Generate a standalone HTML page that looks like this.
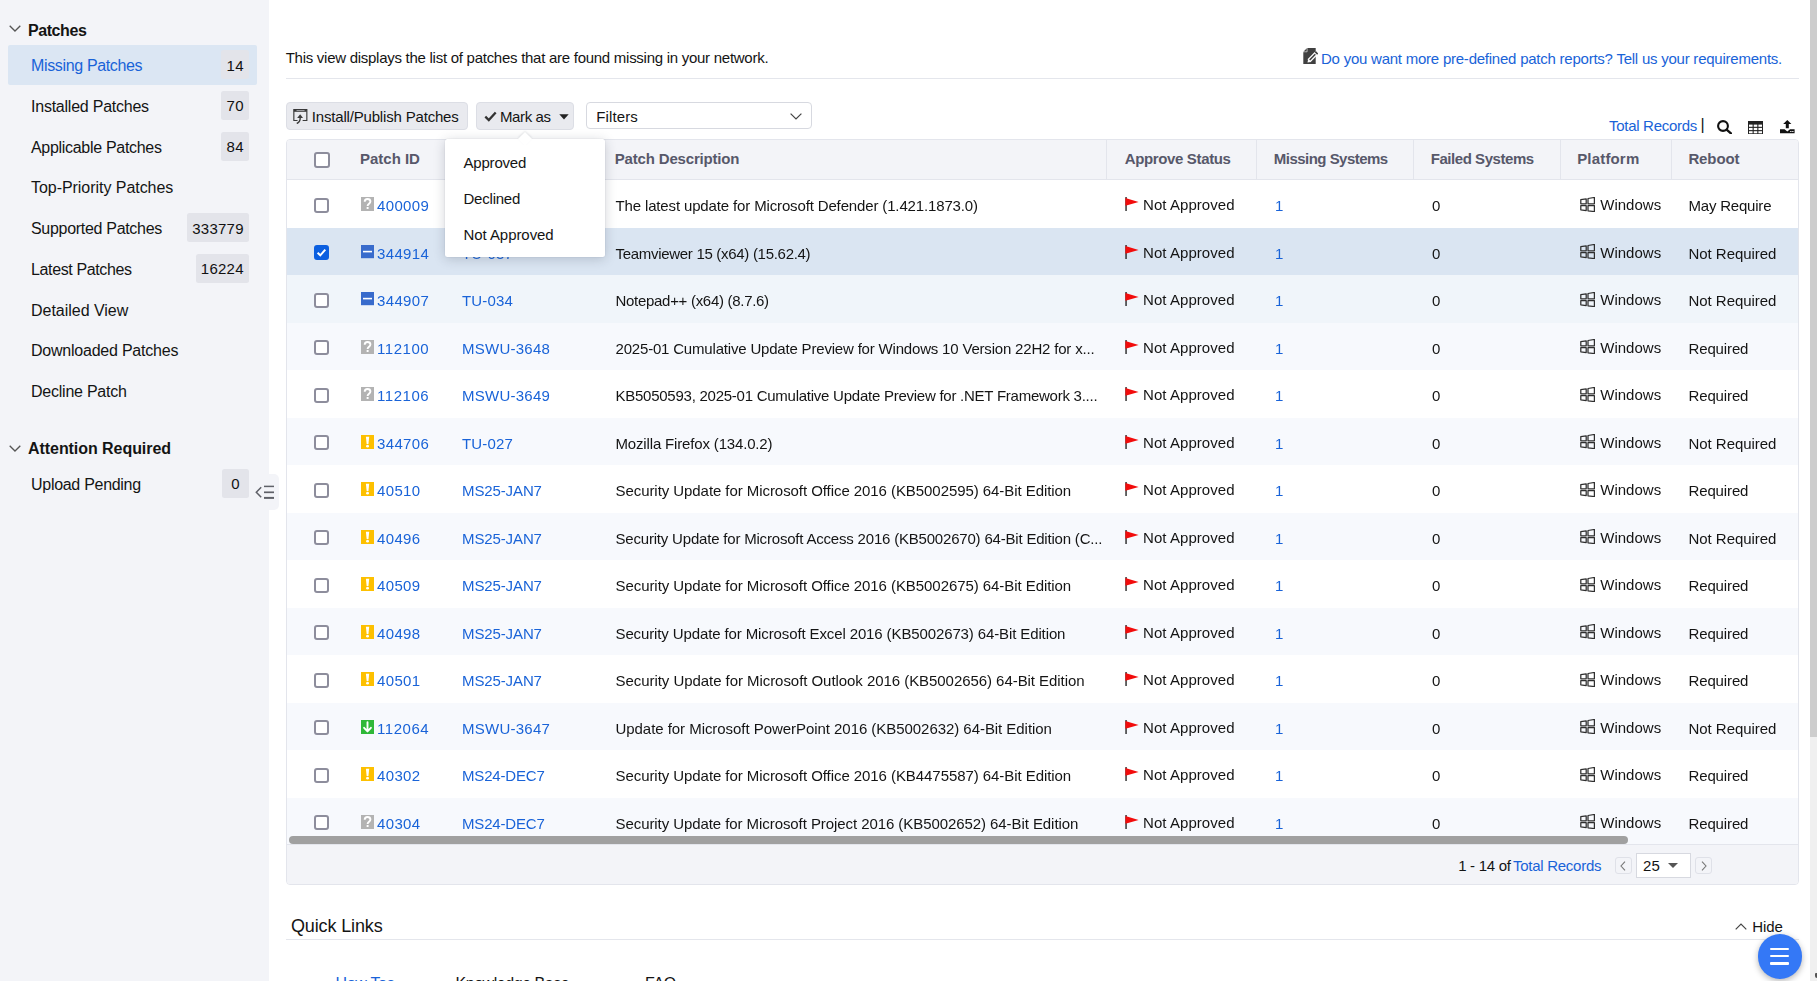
<!DOCTYPE html>
<html lang="en">
<head>
<meta charset="utf-8">
<title>Missing Patches</title>
<style>
*{box-sizing:border-box}
html,body{margin:0;padding:0}
body{width:1817px;height:981px;overflow:hidden;position:relative;background:#fff;color:#141414;
 font-family:"Liberation Sans",sans-serif;font-size:15px;-webkit-font-smoothing:antialiased}
a{color:#1963d8;text-decoration:none}
ul{list-style:none;margin:0;padding:0}
svg{display:block;position:absolute}
/* ---------- sidebar ---------- */
#side{position:absolute;left:0;top:0;width:269px;height:981px;background:#f3f4f8}
#side h3{position:absolute;left:28px;margin:0;font-size:16px;font-weight:700;line-height:20px;color:#141414;white-space:nowrap}
#side .chev{left:9px;width:12px;height:7px}
#side li{position:absolute;left:8px;width:249px;height:39.500px;border-radius:2px}
#side li.on{background:#dbe6f3}
#side li a{position:absolute;left:23px;top:1.100px;line-height:40px;font-size:16px;color:#141414;white-space:nowrap}
#side li.on a{color:#1963d8}
#side li b{position:absolute;right:8px;top:5.250px;height:29px;line-height:29px;padding:.3px 5.200px 0;min-width:27px;text-align:center;border-radius:2.500px;background:#e3e4ea;
 font-weight:400;font-size:15px;color:#111}
#collapse{position:absolute;left:262px;top:474px;width:17px;height:36px;background:#f3f4f8;border-radius:0 5px 5px 0}
/* ---------- main ---------- */
#main{position:absolute;left:0;top:0;width:1810px;height:981px}
.abs{position:absolute;white-space:nowrap;line-height:20px}
#intro{left:285.700px;top:48.100px}
#more{top:49.100px;left:1321px}
#hr1{position:absolute;left:286px;top:78px;width:1513px;height:1px;background:#e4e6ec}
.btn{position:absolute;top:102px;height:28px;border:1px solid #dcdee5;border-radius:4px;background:#e9eaef}
.btn span{position:absolute;top:.1px;line-height:27px;white-space:nowrap}
#filters{position:absolute;left:586px;top:102px;width:226px;height:27px;border:1px solid #d7d9e0;border-radius:4px;background:#fff}
#filters span{position:absolute;left:9.200px;top:1.100px;line-height:26px}
/* ---------- table ---------- */
#grid{position:absolute;left:286px;top:139px;width:1513px;height:746px;border:1px solid #e3e5ec;border-radius:4px;background:#fff;overflow:hidden}
#thead{position:absolute;left:0;top:0;width:1511px;height:40px;background:#f3f4f8;border-bottom:1px solid #e3e5ec}
#thead b{position:absolute;top:0;line-height:37px;font-size:15px;font-weight:700;color:#57586a;white-space:nowrap}
#thead i{position:absolute;top:0;width:1px;height:39px;background:#e3e5ec}
#tbody{position:absolute;left:0;top:40px;width:1511px;height:665px;will-change:transform}
.row{position:absolute;left:0;width:1511px;height:47.500px;background:#fff}
.row.alt{background:#f7f9fd}
.row.hov{background:#f0f5fa}
.row.sel{background:#dae5f2}
.row>*{position:absolute;top:2.100px;line-height:47.500px;white-space:nowrap}
.cb{left:27px;top:17.500px;width:15px;height:15px;border:2px solid #8d8d9c;border-radius:3px;background:#fff}
.cb.on{background:#0b5fe0;border-color:#0b5fe0}
.sev{left:74px;top:17px !important;width:13px;height:14px}
.c-id{left:90px}
.c-bu{left:175px}
.c-de{left:328.500px}
.flag{left:837.500px;top:17px !important;width:14px;height:14px}
.c-ap{left:856px;top:1.100px !important}
.c-mi{left:988px}
.c-fa{left:1145px}
.win{left:1292.500px;top:16.500px !important;width:15px;height:15px}
.c-pl{left:1313.200px;top:1.100px !important}
.c-re{left:1401.500px}
#hscroll{position:absolute;left:2px;top:696px;width:1339px;height:8px;border-radius:4px;background:#a0a0a0}
#tfoot{position:absolute;left:0;top:704px;width:1511px;height:40px;background:#f3f4f8;border-top:1px solid #e3e5ec}
.pg{position:absolute;top:12px;width:17px;height:17px;border:1px solid #dfe1e8;border-radius:3px;background:#f3f4f8}
#psize{position:absolute;left:1348.500px;top:8px;width:55px;height:24.500px;border:1px solid #d7d9e0;background:#fff}
/* ---------- dropdown ---------- */
#menu{position:absolute;left:445px;top:139px;width:160px;height:118px;background:#fff;border-radius:2.500px;box-shadow:0 2px 12px rgba(40,50,70,.22),0 0 2px rgba(40,50,70,.12)}
#menu:before{content:"";position:absolute;left:75.200px;top:-5px;width:10px;height:10px;background:#fff;transform:rotate(45deg);box-shadow:-1px -1px 2px rgba(40,50,70,.10)}
#menu li{position:absolute;left:0;width:160px;height:36px;line-height:36px;background:#fff}
#menu li span{position:absolute;left:18.500px;top:0;white-space:nowrap}
/* ---------- quick links ---------- */
#ql{left:291px;top:916.100px;font-size:18px}
#hr2{position:absolute;left:286px;top:939px;width:1513px;height:1px;background:#e4e6ec}
#fab{position:absolute;left:1757.500px;top:934px;width:44.500px;height:44.500px;border-radius:50%;background:#3478f6;box-shadow:0 2px 6px rgba(0,0,0,.3)}
#fab i{position:absolute;left:12.500px;width:19px;height:2.300px;border-radius:1px;background:#fff}
/* ---------- page scrollbar ---------- */
#vtrack{position:absolute;left:1810px;top:0;width:7px;height:981px;background:#f0f0f0}
#vthumb{position:absolute;left:1810px;top:0;width:7px;height:736.700px;background:#cdcdcd}
#varrow{position:absolute;left:1815px;top:973px;width:2px;height:4.500px;background:#555;border-radius:1px 0 0 2px}
</style>
</head>
<body>
<nav id="side">
<svg class="chev" style="top:25px" viewBox="0 0 12 7"><path d="M.7.700L6 6l5.300-5.300" fill="none" stroke="#555" stroke-width="1.300"/></svg>
<h3 style="letter-spacing:-0.425px;top:21.1px;">Patches</h3>
<ul>
<li class=on style="top:45.0px"><a href="#" style="letter-spacing:-0.349px;">Missing Patches</a><b style="letter-spacing:0.259px;">14</b></li>
<li style="top:85.75px"><a href="#" style="letter-spacing:-0.233px;">Installed Patches</a><b style="letter-spacing:0.259px;">70</b></li>
<li style="top:126.5px"><a href="#" style="letter-spacing:-0.304px;">Applicable Patches</a><b style="letter-spacing:0.259px;">84</b></li>
<li style="top:167.25px"><a href="#" style="letter-spacing:-0.044px;">Top-Priority Patches</a></li>
<li style="top:208.0px"><a href="#" style="letter-spacing:-0.302px;">Supported Patches</a><b style="letter-spacing:0.257px;">333779</b></li>
<li style="top:248.75px"><a href="#" style="letter-spacing:-0.368px;">Latest Patches</a><b style="letter-spacing:0.256px;">16224</b></li>
<li style="top:289.5px"><a href="#" style="letter-spacing:-0.022px;">Detailed View</a></li>
<li style="top:330.25px"><a href="#" style="letter-spacing:-0.225px;">Downloaded Patches</a></li>
<li style="top:371.0px"><a href="#" style="letter-spacing:-0.235px;">Decline Patch</a></li>
</ul>
<svg class="chev" style="top:444.5px" viewBox="0 0 12 7"><path d="M.7.700L6 6l5.300-5.300" fill="none" stroke="#555" stroke-width="1.300"/></svg>
<h3 style="letter-spacing:-0.056px;top:439.1px;">Attention Required</h3>
<ul>
<li style="top:463.75px"><a href="#" style="letter-spacing:-0.288px;">Upload Pending</a><b style="letter-spacing:0.359px;">0</b></li>
</ul>
</nav>
<div id="collapse"><svg style="left:-7px;top:11px;width:20px;height:14px" viewBox="0 0 20 14"><path d="M6.200 2.300L1.300 7.300l4.900 5" fill="none" stroke="#5f6168" stroke-width="1.500"/><path d="M9 1.400h10" stroke="#5f6168" stroke-width="1.500"/><path d="M9 7.300h10" stroke="#5f6168" stroke-width="1.700"/><path d="M9 12.900h10" stroke="#5f6168" stroke-width="2"/></svg></div>
<main id="main">
<p class="abs" id="intro" style="letter-spacing:-0.269px;margin:0;">This view displays the list of patches that are found missing in your network.</p>
<svg style="left:1303px;top:48px;width:15px;height:16px" viewBox="0 0 15 16"><path d="M4.200 0H12.700V16H.3V3.900z" fill="#404040"/><path d="M0 3.800L4.100 -.3v4.100z" fill="#404040" stroke="#fff" stroke-width=".6"/><path d="M6 12.700L13.200 5.400" stroke="#fff" stroke-width="4.200"/><path d="M4.500 14.600l.6-3 2.500 2.300z" fill="#fff"/><path d="M6.700 12L12.300 6.300" stroke="#404040" stroke-width="1.600"/><path d="M13 5.600l1.200-1.200" stroke="#404040" stroke-width="3.200"/></svg>
<a href="#" class="abs" id="more" style="letter-spacing:-0.235px;">Do you want more pre-defined patch reports? Tell us your requirements.</a>
<div id="hr1"></div>
<div class="btn" style="left:286px;width:182px"><svg style="left:5.100px;top:5px;width:16.700px;height:16px" viewBox="0 0 16 16"><path d="M5.200 12.500H1.500V1.500h13v11H10.300" fill="none" stroke="#3a3a3a" stroke-width="1.150"/><path d="M1.500 2.600h13" stroke="#3a3a3a" stroke-width="2.400"/><path d="M4.200 2.500h8" stroke="#c9cad0" stroke-width=".7"/><path d="M4.400 15.500c2.600-.8 3.500-2.700 3.500-5.900" fill="none" stroke="#3a3a3a" stroke-width="1.400"/><path d="M4.800 10L7.800 6.300l2.900 3.700z" fill="#3a3a3a"/></svg><span style="letter-spacing:-0.179px;left:24.8px;">Install/Publish Patches</span></div>
<div class="btn" style="left:476px;width:98px"><svg style="left:6.800px;top:8.200px;width:13px;height:11px" viewBox="0 0 13 11"><path d="M1.300 5.600l3.500 3.400 6.900-7.500" fill="none" stroke="#333" stroke-width="2.300"/></svg><span style="letter-spacing:-0.387px;left:23px;">Mark as</span><svg style="left:81.600px;top:11.300px;width:10px;height:6px" viewBox="0 0 10 6"><path d="M.3.300h9.400L5 5.600z" fill="#222"/></svg></div>
<div id="filters"><span style="letter-spacing:0.137px;">Filters</span><svg style="left:202.600px;top:9.600px;width:12px;height:7px" viewBox="0 0 12 7"><path d="M.6.600L6 6l5.400-5.400" fill="none" stroke="#444" stroke-width="1.200"/></svg></div>
<a href="#" class="abs" style="letter-spacing:-0.294px;left:1609px;top:116.100px;">Total Records</a>
<span class="abs" style="left:1700.500px;top:114.500px;font-size:16px">|</span>
<svg style="left:1716.500px;top:120px;width:15px;height:14px" viewBox="0 0 15 14"><circle cx="6" cy="6" r="4.900" fill="none" stroke="#111" stroke-width="2.100"/><path d="M9.600 9.600l4.300 3.700" stroke="#111" stroke-width="2.400" stroke-linecap="round"/></svg>
<svg style="left:1748px;top:120.500px;width:15px;height:13.300px" viewBox="0 0 15 13.300"><rect width="15" height="13.300" fill="#222"/><g fill="#fff"><rect x="1" y="3.600" width="3.600" height="2.200"/><rect x="5.700" y="3.600" width="3.600" height="2.200"/><rect x="10.400" y="3.600" width="3.600" height="2.200"/><rect x="1" y="6.900" width="3.600" height="2.200"/><rect x="5.700" y="6.900" width="3.600" height="2.200"/><rect x="10.400" y="6.900" width="3.600" height="2.200"/><rect x="1" y="10.200" width="3.600" height="2.100"/><rect x="5.700" y="10.200" width="3.600" height="2.100"/><rect x="10.400" y="10.200" width="3.600" height="2.100"/></g></svg>
<svg style="left:1780px;top:119.500px;width:15px;height:14px" viewBox="0 0 15 14"><path d="M7.300 0l4.100 4.100H8.800v4.100h-3V4.100H3.200z" fill="#111"/><path d="M0 9.300h4.600l2.700 2.300 2.700-2.300h4.600v4H0z" fill="#111"/><rect x="10.200" y="11" width="1.300" height="1" fill="#fff"/><rect x="12.200" y="11" width="1.300" height="1" fill="#fff"/></svg>
<section id="grid">
<div id="thead"><span class="cb" style="position:absolute;left:27px;top:12.200px;width:16px;height:15.500px"></span>
<b style="letter-spacing:-0.014px;left:73px;">Patch ID</b>
<b style="letter-spacing:-0.197px;left:175px;">Bulletin ID</b>
<b style="letter-spacing:-0.178px;left:327.8px;">Patch Description</b>
<b style="letter-spacing:-0.354px;left:837.7px;">Approve Status</b>
<b style="letter-spacing:-0.521px;left:986.8px;">Missing Systems</b>
<b style="letter-spacing:-0.444px;left:1143.7px;">Failed Systems</b>
<b style="letter-spacing:0.17px;left:1290.2px;">Platform</b>
<b style="letter-spacing:-0.112px;left:1401.4px;">Reboot</b>
<i style="left:819px"></i>
<i style="left:969px"></i>
<i style="left:1126px"></i>
<i style="left:1273px"></i>
<i style="left:1384px"></i>
</div>
<div id="tbody">
<div class="row" style="top:0.0px"><span class="cb"></span><svg class="sev" viewBox="0 0 13 14"><rect width="13" height="14" fill="#b3b3b3"/><path d="M3.700 4.700C3.700 2.900 5 2 6.500 2 8.200 2 9.400 3 9.400 4.500c0 2.100-2.800 2.200-2.800 4.400" fill="none" stroke="#fff" stroke-width="1.900"/><rect x="5.600" y="10" width="2" height="2" rx=".5" fill="#fff"/></svg><a href="#" class="c-id" style="letter-spacing:0.357px;">400009</a><a href="#" class="c-bu" style="letter-spacing:0.245px;">MSWU-3650</a><span class="c-de" style="letter-spacing:-0.142px;">The latest update for Microsoft Defender (1.421.1873.0)</span><svg class="flag" viewBox="0 0 14 14"><rect x=".4" width="1.300" height="14" fill="#161616"/><path d="M.4 1.100L13.600 4.900.4 8.700z" fill="#f20c0c"/></svg><span class="c-ap" style="letter-spacing:0.058px;">Not Approved</span><a href="#" class="c-mi" style="letter-spacing:0.159px;">1</a><span class="c-fa" style="letter-spacing:0.159px;">0</span><svg class="win" viewBox="0 0 15 15"><g fill="none" stroke="#2e2e2e" stroke-width="1.250" stroke-linejoin="round"><path d="M.8 2.600L6.200 1.800v5H.8z"/><path d="M8 1.500L14.400.5v6.300H8z"/><path d="M.8 8.600h5.400v5L.8 12.800z"/><path d="M8 8.600h6.400v6L8 13.800z"/></g></svg><span class="c-pl" style="letter-spacing:0.03px;">Windows</span><span class="c-re" style="letter-spacing:-0.204px;">May Require</span></div>
<div class="row sel" style="top:47.5px"><span class="cb on"><svg style="left:-1px;top:-1px;width:13px;height:13px" viewBox="0 0 13 13"><path d="M2.600 6.700l2.700 2.600 5-5.600" fill="none" stroke="#fff" stroke-width="2"/></svg></span><svg class="sev" viewBox="0 0 13 14"><rect width="13" height="13.200" fill="#386bcc"/><rect x="2" y="5.800" width="9" height="1.600" fill="#fff"/></svg><a href="#" class="c-id" style="letter-spacing:0.357px;">344914</a><a href="#" class="c-bu" style="letter-spacing:0.155px;">TU-037</a><span class="c-de" style="letter-spacing:-0.298px;">Teamviewer 15 (x64) (15.62.4)</span><svg class="flag" viewBox="0 0 14 14"><rect x=".4" width="1.300" height="14" fill="#161616"/><path d="M.4 1.100L13.600 4.900.4 8.700z" fill="#f20c0c"/></svg><span class="c-ap" style="letter-spacing:0.058px;">Not Approved</span><a href="#" class="c-mi" style="letter-spacing:0.159px;">1</a><span class="c-fa" style="letter-spacing:0.159px;">0</span><svg class="win" viewBox="0 0 15 15"><g fill="none" stroke="#2e2e2e" stroke-width="1.250" stroke-linejoin="round"><path d="M.8 2.600L6.200 1.800v5H.8z"/><path d="M8 1.500L14.400.5v6.300H8z"/><path d="M.8 8.600h5.400v5L.8 12.800z"/><path d="M8 8.600h6.400v6L8 13.800z"/></g></svg><span class="c-pl" style="letter-spacing:0.03px;">Windows</span><span class="c-re" style="letter-spacing:-0.041px;">Not Required</span></div>
<div class="row hov" style="top:95.0px"><span class="cb"></span><svg class="sev" viewBox="0 0 13 14"><rect width="13" height="13.200" fill="#386bcc"/><rect x="2" y="5.800" width="9" height="1.600" fill="#fff"/></svg><a href="#" class="c-id" style="letter-spacing:0.357px;">344907</a><a href="#" class="c-bu" style="letter-spacing:0.155px;">TU-034</a><span class="c-de" style="letter-spacing:-0.295px;">Notepad++ (x64) (8.7.6)</span><svg class="flag" viewBox="0 0 14 14"><rect x=".4" width="1.300" height="14" fill="#161616"/><path d="M.4 1.100L13.600 4.900.4 8.700z" fill="#f20c0c"/></svg><span class="c-ap" style="letter-spacing:0.058px;">Not Approved</span><a href="#" class="c-mi" style="letter-spacing:0.159px;">1</a><span class="c-fa" style="letter-spacing:0.159px;">0</span><svg class="win" viewBox="0 0 15 15"><g fill="none" stroke="#2e2e2e" stroke-width="1.250" stroke-linejoin="round"><path d="M.8 2.600L6.200 1.800v5H.8z"/><path d="M8 1.500L14.400.5v6.300H8z"/><path d="M.8 8.600h5.400v5L.8 12.800z"/><path d="M8 8.600h6.400v6L8 13.800z"/></g></svg><span class="c-pl" style="letter-spacing:0.03px;">Windows</span><span class="c-re" style="letter-spacing:-0.041px;">Not Required</span></div>
<div class="row alt" style="top:142.5px"><span class="cb"></span><svg class="sev" viewBox="0 0 13 14"><rect width="13" height="14" fill="#b3b3b3"/><path d="M3.700 4.700C3.700 2.900 5 2 6.500 2 8.200 2 9.400 3 9.400 4.500c0 2.100-2.800 2.200-2.800 4.400" fill="none" stroke="#fff" stroke-width="1.900"/><rect x="5.600" y="10" width="2" height="2" rx=".5" fill="#fff"/></svg><a href="#" class="c-id" style="letter-spacing:0.542px;">112100</a><a href="#" class="c-bu" style="letter-spacing:0.245px;">MSWU-3648</a><span class="c-de" style="letter-spacing:-0.186px;">2025-01 Cumulative Update Preview for Windows 10 Version 22H2 for x...</span><svg class="flag" viewBox="0 0 14 14"><rect x=".4" width="1.300" height="14" fill="#161616"/><path d="M.4 1.100L13.600 4.900.4 8.700z" fill="#f20c0c"/></svg><span class="c-ap" style="letter-spacing:0.058px;">Not Approved</span><a href="#" class="c-mi" style="letter-spacing:0.159px;">1</a><span class="c-fa" style="letter-spacing:0.159px;">0</span><svg class="win" viewBox="0 0 15 15"><g fill="none" stroke="#2e2e2e" stroke-width="1.250" stroke-linejoin="round"><path d="M.8 2.600L6.200 1.800v5H.8z"/><path d="M8 1.500L14.400.5v6.300H8z"/><path d="M.8 8.600h5.400v5L.8 12.800z"/><path d="M8 8.600h6.400v6L8 13.800z"/></g></svg><span class="c-pl" style="letter-spacing:0.03px;">Windows</span><span class="c-re" style="letter-spacing:-0.134px;">Required</span></div>
<div class="row" style="top:190.0px"><span class="cb"></span><svg class="sev" viewBox="0 0 13 14"><rect width="13" height="14" fill="#b3b3b3"/><path d="M3.700 4.700C3.700 2.900 5 2 6.500 2 8.200 2 9.400 3 9.400 4.500c0 2.100-2.800 2.200-2.800 4.400" fill="none" stroke="#fff" stroke-width="1.900"/><rect x="5.600" y="10" width="2" height="2" rx=".5" fill="#fff"/></svg><a href="#" class="c-id" style="letter-spacing:0.542px;">112106</a><a href="#" class="c-bu" style="letter-spacing:0.245px;">MSWU-3649</a><span class="c-de" style="letter-spacing:-0.251px;">KB5050593, 2025-01 Cumulative Update Preview for .NET Framework 3....</span><svg class="flag" viewBox="0 0 14 14"><rect x=".4" width="1.300" height="14" fill="#161616"/><path d="M.4 1.100L13.600 4.900.4 8.700z" fill="#f20c0c"/></svg><span class="c-ap" style="letter-spacing:0.058px;">Not Approved</span><a href="#" class="c-mi" style="letter-spacing:0.159px;">1</a><span class="c-fa" style="letter-spacing:0.159px;">0</span><svg class="win" viewBox="0 0 15 15"><g fill="none" stroke="#2e2e2e" stroke-width="1.250" stroke-linejoin="round"><path d="M.8 2.600L6.200 1.800v5H.8z"/><path d="M8 1.500L14.400.5v6.300H8z"/><path d="M.8 8.600h5.400v5L.8 12.800z"/><path d="M8 8.600h6.400v6L8 13.800z"/></g></svg><span class="c-pl" style="letter-spacing:0.03px;">Windows</span><span class="c-re" style="letter-spacing:-0.134px;">Required</span></div>
<div class="row alt" style="top:237.5px"><span class="cb"></span><svg class="sev" viewBox="0 0 13 14"><rect width="13" height="14" fill="#fdc000"/><path d="M4.900 1.700h3.300l-.75 7.200h-1.800z" fill="#fff"/><circle cx="6.550" cy="11.200" r="1.400" fill="#fff"/></svg><a href="#" class="c-id" style="letter-spacing:0.357px;">344706</a><a href="#" class="c-bu" style="letter-spacing:0.155px;">TU-027</a><span class="c-de" style="letter-spacing:-0.16px;">Mozilla Firefox (134.0.2)</span><svg class="flag" viewBox="0 0 14 14"><rect x=".4" width="1.300" height="14" fill="#161616"/><path d="M.4 1.100L13.600 4.900.4 8.700z" fill="#f20c0c"/></svg><span class="c-ap" style="letter-spacing:0.058px;">Not Approved</span><a href="#" class="c-mi" style="letter-spacing:0.159px;">1</a><span class="c-fa" style="letter-spacing:0.159px;">0</span><svg class="win" viewBox="0 0 15 15"><g fill="none" stroke="#2e2e2e" stroke-width="1.250" stroke-linejoin="round"><path d="M.8 2.600L6.200 1.800v5H.8z"/><path d="M8 1.500L14.400.5v6.300H8z"/><path d="M.8 8.600h5.400v5L.8 12.800z"/><path d="M8 8.600h6.400v6L8 13.800z"/></g></svg><span class="c-pl" style="letter-spacing:0.03px;">Windows</span><span class="c-re" style="letter-spacing:-0.041px;">Not Required</span></div>
<div class="row" style="top:285.0px"><span class="cb"></span><svg class="sev" viewBox="0 0 13 14"><rect width="13" height="14" fill="#fdc000"/><path d="M4.900 1.700h3.300l-.75 7.200h-1.800z" fill="#fff"/><circle cx="6.550" cy="11.200" r="1.400" fill="#fff"/></svg><a href="#" class="c-id" style="letter-spacing:0.356px;">40510</a><a href="#" class="c-bu" style="letter-spacing:-0.114px;">MS25-JAN7</a><span class="c-de" style="letter-spacing:-0.064px;">Security Update for Microsoft Office 2016 (KB5002595) 64-Bit Edition</span><svg class="flag" viewBox="0 0 14 14"><rect x=".4" width="1.300" height="14" fill="#161616"/><path d="M.4 1.100L13.600 4.900.4 8.700z" fill="#f20c0c"/></svg><span class="c-ap" style="letter-spacing:0.058px;">Not Approved</span><a href="#" class="c-mi" style="letter-spacing:0.159px;">1</a><span class="c-fa" style="letter-spacing:0.159px;">0</span><svg class="win" viewBox="0 0 15 15"><g fill="none" stroke="#2e2e2e" stroke-width="1.250" stroke-linejoin="round"><path d="M.8 2.600L6.200 1.800v5H.8z"/><path d="M8 1.500L14.400.5v6.300H8z"/><path d="M.8 8.600h5.400v5L.8 12.800z"/><path d="M8 8.600h6.400v6L8 13.800z"/></g></svg><span class="c-pl" style="letter-spacing:0.03px;">Windows</span><span class="c-re" style="letter-spacing:-0.134px;">Required</span></div>
<div class="row alt" style="top:332.5px"><span class="cb"></span><svg class="sev" viewBox="0 0 13 14"><rect width="13" height="14" fill="#fdc000"/><path d="M4.900 1.700h3.300l-.75 7.200h-1.800z" fill="#fff"/><circle cx="6.550" cy="11.200" r="1.400" fill="#fff"/></svg><a href="#" class="c-id" style="letter-spacing:0.356px;">40496</a><a href="#" class="c-bu" style="letter-spacing:-0.114px;">MS25-JAN7</a><span class="c-de" style="letter-spacing:-0.194px;">Security Update for Microsoft Access 2016 (KB5002670) 64-Bit Edition (C...</span><svg class="flag" viewBox="0 0 14 14"><rect x=".4" width="1.300" height="14" fill="#161616"/><path d="M.4 1.100L13.600 4.900.4 8.700z" fill="#f20c0c"/></svg><span class="c-ap" style="letter-spacing:0.058px;">Not Approved</span><a href="#" class="c-mi" style="letter-spacing:0.159px;">1</a><span class="c-fa" style="letter-spacing:0.159px;">0</span><svg class="win" viewBox="0 0 15 15"><g fill="none" stroke="#2e2e2e" stroke-width="1.250" stroke-linejoin="round"><path d="M.8 2.600L6.200 1.800v5H.8z"/><path d="M8 1.500L14.400.5v6.300H8z"/><path d="M.8 8.600h5.400v5L.8 12.800z"/><path d="M8 8.600h6.400v6L8 13.800z"/></g></svg><span class="c-pl" style="letter-spacing:0.03px;">Windows</span><span class="c-re" style="letter-spacing:-0.041px;">Not Required</span></div>
<div class="row" style="top:380.0px"><span class="cb"></span><svg class="sev" viewBox="0 0 13 14"><rect width="13" height="14" fill="#fdc000"/><path d="M4.900 1.700h3.300l-.75 7.200h-1.800z" fill="#fff"/><circle cx="6.550" cy="11.200" r="1.400" fill="#fff"/></svg><a href="#" class="c-id" style="letter-spacing:0.356px;">40509</a><a href="#" class="c-bu" style="letter-spacing:-0.114px;">MS25-JAN7</a><span class="c-de" style="letter-spacing:-0.064px;">Security Update for Microsoft Office 2016 (KB5002675) 64-Bit Edition</span><svg class="flag" viewBox="0 0 14 14"><rect x=".4" width="1.300" height="14" fill="#161616"/><path d="M.4 1.100L13.600 4.900.4 8.700z" fill="#f20c0c"/></svg><span class="c-ap" style="letter-spacing:0.058px;">Not Approved</span><a href="#" class="c-mi" style="letter-spacing:0.159px;">1</a><span class="c-fa" style="letter-spacing:0.159px;">0</span><svg class="win" viewBox="0 0 15 15"><g fill="none" stroke="#2e2e2e" stroke-width="1.250" stroke-linejoin="round"><path d="M.8 2.600L6.200 1.800v5H.8z"/><path d="M8 1.500L14.400.5v6.300H8z"/><path d="M.8 8.600h5.400v5L.8 12.800z"/><path d="M8 8.600h6.400v6L8 13.800z"/></g></svg><span class="c-pl" style="letter-spacing:0.03px;">Windows</span><span class="c-re" style="letter-spacing:-0.134px;">Required</span></div>
<div class="row alt" style="top:427.5px"><span class="cb"></span><svg class="sev" viewBox="0 0 13 14"><rect width="13" height="14" fill="#fdc000"/><path d="M4.900 1.700h3.300l-.75 7.200h-1.800z" fill="#fff"/><circle cx="6.550" cy="11.200" r="1.400" fill="#fff"/></svg><a href="#" class="c-id" style="letter-spacing:0.356px;">40498</a><a href="#" class="c-bu" style="letter-spacing:-0.114px;">MS25-JAN7</a><span class="c-de" style="letter-spacing:-0.118px;">Security Update for Microsoft Excel 2016 (KB5002673) 64-Bit Edition</span><svg class="flag" viewBox="0 0 14 14"><rect x=".4" width="1.300" height="14" fill="#161616"/><path d="M.4 1.100L13.600 4.900.4 8.700z" fill="#f20c0c"/></svg><span class="c-ap" style="letter-spacing:0.058px;">Not Approved</span><a href="#" class="c-mi" style="letter-spacing:0.159px;">1</a><span class="c-fa" style="letter-spacing:0.159px;">0</span><svg class="win" viewBox="0 0 15 15"><g fill="none" stroke="#2e2e2e" stroke-width="1.250" stroke-linejoin="round"><path d="M.8 2.600L6.200 1.800v5H.8z"/><path d="M8 1.500L14.400.5v6.300H8z"/><path d="M.8 8.600h5.400v5L.8 12.800z"/><path d="M8 8.600h6.400v6L8 13.800z"/></g></svg><span class="c-pl" style="letter-spacing:0.03px;">Windows</span><span class="c-re" style="letter-spacing:-0.134px;">Required</span></div>
<div class="row" style="top:475.0px"><span class="cb"></span><svg class="sev" viewBox="0 0 13 14"><rect width="13" height="14" fill="#fdc000"/><path d="M4.900 1.700h3.300l-.75 7.200h-1.800z" fill="#fff"/><circle cx="6.550" cy="11.200" r="1.400" fill="#fff"/></svg><a href="#" class="c-id" style="letter-spacing:0.356px;">40501</a><a href="#" class="c-bu" style="letter-spacing:-0.114px;">MS25-JAN7</a><span class="c-de" style="letter-spacing:-0.053px;">Security Update for Microsoft Outlook 2016 (KB5002656) 64-Bit Edition</span><svg class="flag" viewBox="0 0 14 14"><rect x=".4" width="1.300" height="14" fill="#161616"/><path d="M.4 1.100L13.600 4.900.4 8.700z" fill="#f20c0c"/></svg><span class="c-ap" style="letter-spacing:0.058px;">Not Approved</span><a href="#" class="c-mi" style="letter-spacing:0.159px;">1</a><span class="c-fa" style="letter-spacing:0.159px;">0</span><svg class="win" viewBox="0 0 15 15"><g fill="none" stroke="#2e2e2e" stroke-width="1.250" stroke-linejoin="round"><path d="M.8 2.600L6.200 1.800v5H.8z"/><path d="M8 1.500L14.400.5v6.300H8z"/><path d="M.8 8.600h5.400v5L.8 12.800z"/><path d="M8 8.600h6.400v6L8 13.800z"/></g></svg><span class="c-pl" style="letter-spacing:0.03px;">Windows</span><span class="c-re" style="letter-spacing:-0.134px;">Required</span></div>
<div class="row alt" style="top:522.5px"><span class="cb"></span><svg class="sev" viewBox="0 0 13 14"><rect width="13" height="14" fill="#2fb838"/><path d="M6.500 2.200v8.800M3.100 7.800l3.400 3.600 3.400-3.600" fill="none" stroke="#fff" stroke-width="1.900" stroke-linecap="round" stroke-linejoin="round"/></svg><a href="#" class="c-id" style="letter-spacing:0.542px;">112064</a><a href="#" class="c-bu" style="letter-spacing:0.245px;">MSWU-3647</a><span class="c-de" style="letter-spacing:-0.048px;">Update for Microsoft PowerPoint 2016 (KB5002632) 64-Bit Edition</span><svg class="flag" viewBox="0 0 14 14"><rect x=".4" width="1.300" height="14" fill="#161616"/><path d="M.4 1.100L13.600 4.900.4 8.700z" fill="#f20c0c"/></svg><span class="c-ap" style="letter-spacing:0.058px;">Not Approved</span><a href="#" class="c-mi" style="letter-spacing:0.159px;">1</a><span class="c-fa" style="letter-spacing:0.159px;">0</span><svg class="win" viewBox="0 0 15 15"><g fill="none" stroke="#2e2e2e" stroke-width="1.250" stroke-linejoin="round"><path d="M.8 2.600L6.200 1.800v5H.8z"/><path d="M8 1.500L14.400.5v6.300H8z"/><path d="M.8 8.600h5.400v5L.8 12.800z"/><path d="M8 8.600h6.400v6L8 13.800z"/></g></svg><span class="c-pl" style="letter-spacing:0.03px;">Windows</span><span class="c-re" style="letter-spacing:-0.041px;">Not Required</span></div>
<div class="row" style="top:570.0px"><span class="cb"></span><svg class="sev" viewBox="0 0 13 14"><rect width="13" height="14" fill="#fdc000"/><path d="M4.900 1.700h3.300l-.75 7.200h-1.800z" fill="#fff"/><circle cx="6.550" cy="11.200" r="1.400" fill="#fff"/></svg><a href="#" class="c-id" style="letter-spacing:0.356px;">40302</a><a href="#" class="c-bu" style="letter-spacing:-0.166px;">MS24-DEC7</a><span class="c-de" style="letter-spacing:-0.064px;">Security Update for Microsoft Office 2016 (KB4475587) 64-Bit Edition</span><svg class="flag" viewBox="0 0 14 14"><rect x=".4" width="1.300" height="14" fill="#161616"/><path d="M.4 1.100L13.600 4.900.4 8.700z" fill="#f20c0c"/></svg><span class="c-ap" style="letter-spacing:0.058px;">Not Approved</span><a href="#" class="c-mi" style="letter-spacing:0.159px;">1</a><span class="c-fa" style="letter-spacing:0.159px;">0</span><svg class="win" viewBox="0 0 15 15"><g fill="none" stroke="#2e2e2e" stroke-width="1.250" stroke-linejoin="round"><path d="M.8 2.600L6.200 1.800v5H.8z"/><path d="M8 1.500L14.400.5v6.300H8z"/><path d="M.8 8.600h5.400v5L.8 12.800z"/><path d="M8 8.600h6.400v6L8 13.800z"/></g></svg><span class="c-pl" style="letter-spacing:0.03px;">Windows</span><span class="c-re" style="letter-spacing:-0.134px;">Required</span></div>
<div class="row alt" style="top:617.5px"><span class="cb"></span><svg class="sev" viewBox="0 0 13 14"><rect width="13" height="14" fill="#b3b3b3"/><path d="M3.700 4.700C3.700 2.900 5 2 6.500 2 8.200 2 9.400 3 9.400 4.500c0 2.100-2.800 2.200-2.800 4.400" fill="none" stroke="#fff" stroke-width="1.900"/><rect x="5.600" y="10" width="2" height="2" rx=".5" fill="#fff"/></svg><a href="#" class="c-id" style="letter-spacing:0.356px;">40304</a><a href="#" class="c-bu" style="letter-spacing:-0.166px;">MS24-DEC7</a><span class="c-de" style="letter-spacing:-0.072px;">Security Update for Microsoft Project 2016 (KB5002652) 64-Bit Edition</span><svg class="flag" viewBox="0 0 14 14"><rect x=".4" width="1.300" height="14" fill="#161616"/><path d="M.4 1.100L13.600 4.900.4 8.700z" fill="#f20c0c"/></svg><span class="c-ap" style="letter-spacing:0.058px;">Not Approved</span><a href="#" class="c-mi" style="letter-spacing:0.159px;">1</a><span class="c-fa" style="letter-spacing:0.159px;">0</span><svg class="win" viewBox="0 0 15 15"><g fill="none" stroke="#2e2e2e" stroke-width="1.250" stroke-linejoin="round"><path d="M.8 2.600L6.200 1.800v5H.8z"/><path d="M8 1.500L14.400.5v6.300H8z"/><path d="M.8 8.600h5.400v5L.8 12.800z"/><path d="M8 8.600h6.400v6L8 13.800z"/></g></svg><span class="c-pl" style="letter-spacing:0.03px;">Windows</span><span class="c-re" style="letter-spacing:-0.134px;">Required</span></div>
</div>
<div id="hscroll"></div>
<div id="tfoot"><span class="abs" style="letter-spacing:-0.294px;left:1171.200px;top:11.100px;">1 - 14 of</span><a href="#" class="abs" style="letter-spacing:-0.271px;left:1226px;top:11.100px;">Total Records</a><span class="pg" style="left:1327.500px"><svg style="left:4px;top:2.500px;width:6px;height:10px" viewBox="0 0 6 10"><path d="M5 .7L1 5l4 4.300" fill="none" stroke="#777" stroke-width="1.100"/></svg></span><span id="psize"><span class="abs" style="letter-spacing:0.159px;left:6.500px;top:2.100px;">25</span><svg style="left:31px;top:9px;width:10px;height:5px" viewBox="0 0 10 5"><path d="M0 0h10L5 5z" fill="#555"/></svg></span><span class="pg" style="left:1407.500px"><svg style="left:5px;top:2.500px;width:6px;height:10px" viewBox="0 0 6 10"><path d="M1 .7L5 5 1 9.300" fill="none" stroke="#777" stroke-width="1.100"/></svg></span></div>
</section>
<ul id="menu">
<li style="top:6.1px"><span style="letter-spacing:-0.196px;">Approved</span></li>
<li style="top:42.1px"><span style="letter-spacing:-0.22px;">Declined</span></li>
<li style="top:78.1px"><span style="letter-spacing:-0.063px;">Not Approved</span></li>
</ul>
<h2 class="abs" id="ql" style="font-size:18px;letter-spacing:-0.138px;margin:0;font-weight:400;">Quick Links</h2>
<svg style="left:1735px;top:922.500px;width:12px;height:7px" viewBox="0 0 12 7"><path d="M.7 6.300L6 1l5.300 5.300" fill="none" stroke="#444" stroke-width="1.200"/></svg>
<span class="abs" style="letter-spacing:-0.098px;left:1752.200px;top:917.100px;">Hide</span>
<div id="hr2"></div>
<a href="#" class="abs" style="font-size:16px;letter-spacing:-0.312px;left:335.500px;top:973.600px;">How Tos</a>
<span class="abs" style="font-size:16px;letter-spacing:-0.456px;left:455.500px;top:973.600px;">Knowledge Base</span>
<span class="abs" style="font-size:16px;letter-spacing:-0.382px;left:645px;top:973.600px;">FAQ</span>
<div id="fab"><i style="top:13.800px"></i><i style="top:20.800px"></i><i style="top:27.800px;height:2.800px"></i></div>
</main>
<div id="vtrack"></div><div id="vthumb"></div><div id="varrow"></div>
</body>
</html>
